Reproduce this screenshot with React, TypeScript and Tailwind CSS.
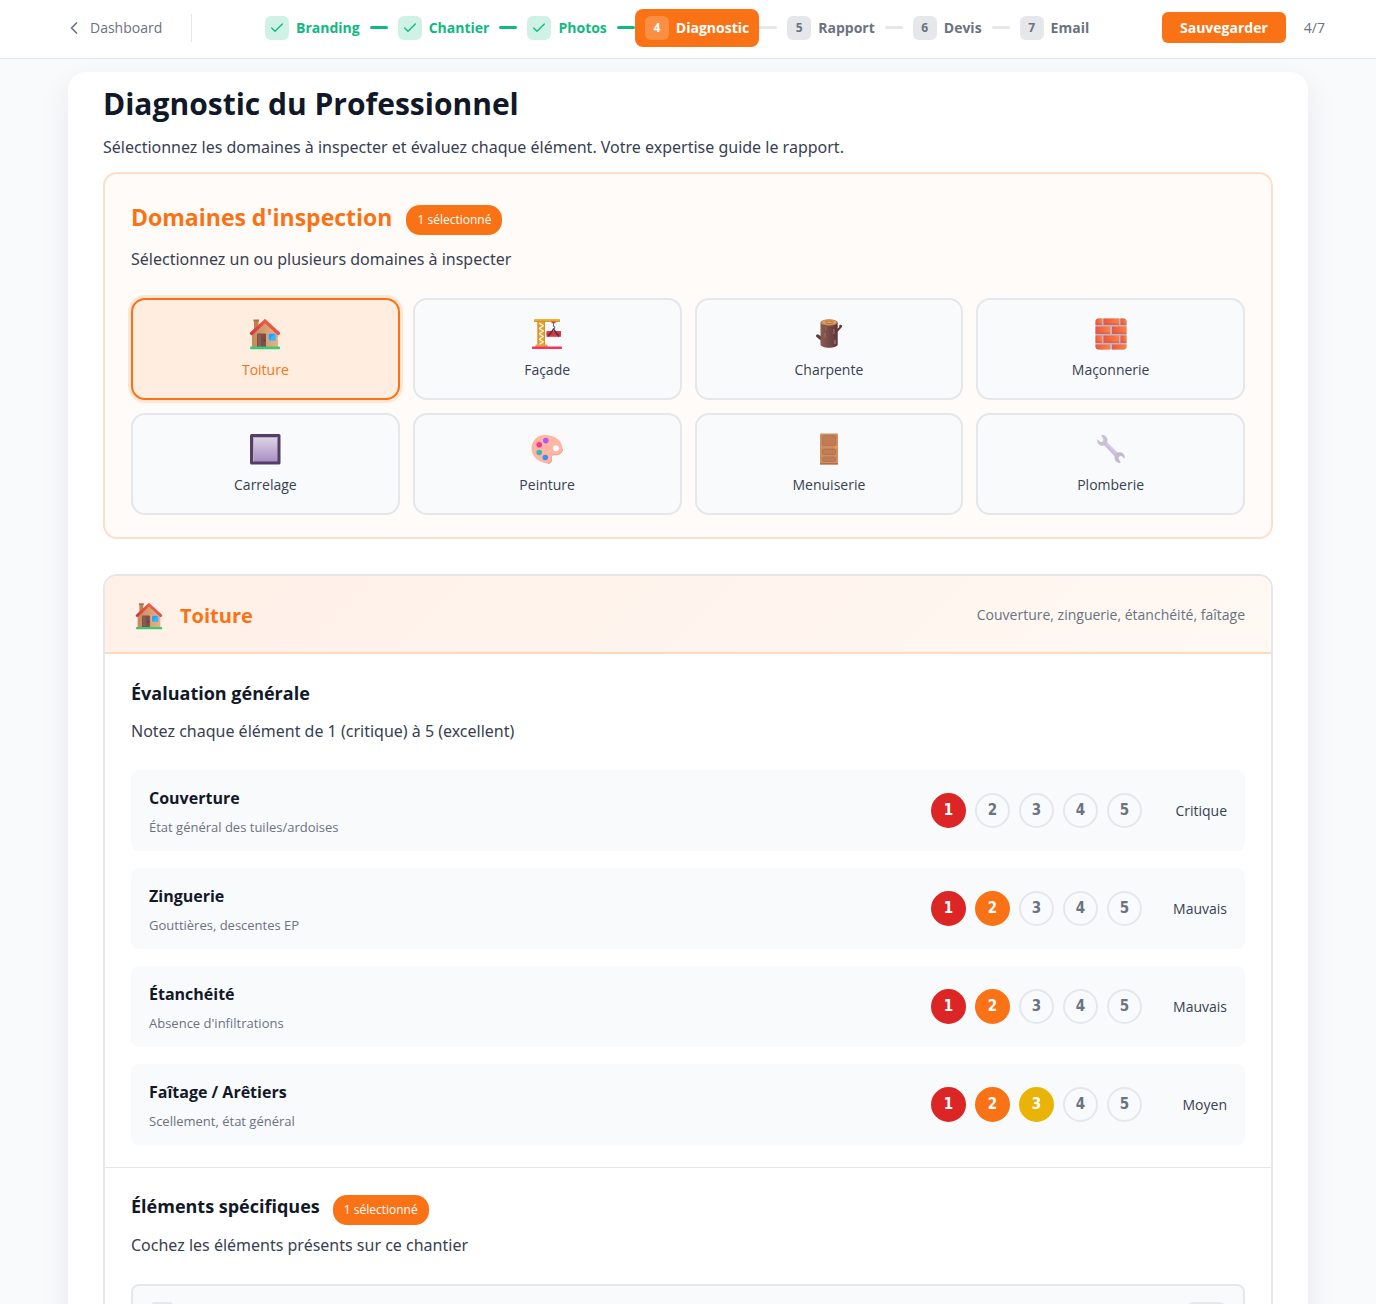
import { useState } from 'react';
import type { ReactNode } from 'react';
import { Check, ChevronLeft } from 'lucide-react';
import clsx from 'clsx';

const HouseIcon = () => (
  <svg viewBox="0 0 32 32" className="h-full w-full" aria-hidden="true">
    <defs>
      <linearGradient id="house-wall" x1="0" x2="1">
        <stop offset="0" stopColor="#c58a5c" />
        <stop offset="1" stopColor="#eab184" />
      </linearGradient>
      <linearGradient id="house-roof" x1="0" y1="1" x2="1" y2="0">
        <stop offset="0" stopColor="#d62f3c" />
        <stop offset="1" stopColor="#f4734a" />
      </linearGradient>
    </defs>
    <path d="M5 2h4.500v12H5z" fill="#b98450" />
    <path d="M4.500 1.500h5.500v2H4.500z" fill="#a87445" />
    <path d="M3 15 16 3l13 12v14H3z" fill="url(#house-wall)" />
    <path d="M16 .8 30.600 14.300a1.300 1.300 0 0 1 .2 1.900l-.5.600a1.200 1.200 0 0 1-1.700.1L16 5.200 3.400 16.900a1.200 1.200 0 0 1-1.700-.1l-.5-.6a1.300 1.300 0 0 1 .2-1.900z" fill="url(#house-roof)" />
    <path d="M8 16.500a1 1 0 0 1 1-1h7a1 1 0 0 1 1 1V29H8z" fill="#7d4f49" />
    <path d="M9 16.500h3V28H9z" fill="#8d5d55" />
    <circle cx="15.300" cy="22.500" r=".8" fill="#4d2c30" />
    <path d="M19 15h8v8h-8z" fill="#f4c295" />
    <path d="M19.500 15.500h7v7h-7z" fill="#2f9df0" />
    <path d="m19.500 22.500 7-7v7z" fill="#35b7f7" />
    <rect x="1" y="28.500" width="30" height="2.700" rx="1" fill="#35cc78" />
  </svg>
);

const CraneIcon = () => (
  <svg viewBox="0 0 32 32" className="h-full w-full" aria-hidden="true">
    <path d="M6.500 3H14v25H6.500z" fill="#e3a535" />
    <path d="m8 5 4.500 2.700L8 10.400l4.500 2.700L8 15.800l4.500 2.700L8 21.200l4.500 2.700L8 26.600" fill="none" stroke="#fdf4dd" strokeWidth="1.200" />
    <path d="M6.500 3h1.300v25H6.500zM12.900 3H14v25h-1.100z" fill="#d98d2e" />
    <rect x="3" y="1" width="26" height="2.800" rx=".8" fill="#e8b52f" />
    <path d="M3 2.800h26v1H3z" fill="#c98d2b" />
    <rect x="4.500" y="26.500" width="12" height="2.500" rx=".6" fill="#e3a535" />
    <path d="M20.500 3.600h4v1.600h-4z" fill="#dc2d55" />
    <path d="M22.500 5v3.200c1.600.6 1.800 2.800 0 3" fill="none" stroke="#777181" strokeWidth="1.200" />
    <path d="M15.500 13H30v5.800H15.500z" fill="#e8354c" />
    <path d="M15.500 15H30v1.700H15.500z" fill="#b8402c" />
    <path d="m17 18.500 5.500-7.500 5.500 7.500" fill="none" stroke="#432e50" strokeWidth="1.300" />
    <rect x="1" y="28.600" width="30" height="2.300" rx=".6" fill="#f83160" />
  </svg>
);

const WoodIcon = () => (
  <svg viewBox="0 0 32 32" className="h-full w-full" aria-hidden="true">
    <defs>
      <linearGradient id="wood-bark" x1="0" x2="1">
        <stop offset="0" stopColor="#8b5d50" />
        <stop offset=".5" stopColor="#754a45" />
        <stop offset="1" stopColor="#5d3639" />
      </linearGradient>
    </defs>
    <path d="m23 12 3.200-2.800V7.600a1.500 1.500 0 0 1 2.500-.4c.6.600.5 1.500-.2 2.300L23 15.500zM9 19l-4.200-2.800a1.700 1.700 0 0 0-1.500 2.600L9 23.500z" fill="#5a3839" />
    <path d="M7.500 4.500h17.200v22c0 1.800-3.800 3.200-8.600 3.200s-8.600-1.400-8.600-3.200z" fill="url(#wood-bark)" />
    <path d="M11 15h2v5h-1.500zM21 22h2v4h-2zM12 9h1.500v3H12zM20 11h1.500v5H20z" fill="#956258" />
    <ellipse cx="16.100" cy="4.500" rx="8.600" ry="3.200" fill="#bb7b43" />
    <ellipse cx="16.100" cy="4.300" rx="7.200" ry="2.400" fill="#dca061" />
    <ellipse cx="16.100" cy="4.300" rx="4" ry="1.300" fill="none" stroke="#b77742" strokeWidth="1" />
  </svg>
);

const BrickIcon = () => (
  <svg viewBox="0 0 32 32" className="h-full w-full" aria-hidden="true">
    <defs>
      <linearGradient id="brick-fill" x1="0" x2="1">
        <stop offset="0" stopColor="#ef5540" />
        <stop offset="1" stopColor="#fb8340" />
      </linearGradient>
      <clipPath id="brick-clip">
        <rect x=".5" y=".5" width="31" height="31" rx="3" />
      </clipPath>
    </defs>
    <g clipPath="url(#brick-clip)">
      <path d="M0 0h32v32H0z" fill="#c3b3c2" />
      <g fill="url(#brick-fill)">
        <path d="M0 0h7v6.500H0z" />
        <path d="M8.500 0H24v6.500H8.500z" />
        <path d="M25.500 0H32v6.500h-6.500z" />
        <path d="M0 8.500h15v7H0z" />
        <path d="M17 8.500h15v7H17z" />
        <path d="M0 17.500h7v7H0z" />
        <path d="M8.500 17.500H24v7H8.500z" />
        <path d="M25.500 17.500H32v7h-6.500z" />
        <path d="M0 26.500h15V32H0z" />
        <path d="M17 26.500h15V32H17z" />
      </g>
      <path d="M0 5.700h7v.9H0zM8.500 5.700H24v.9H8.500zM25.500 5.700H32v.9h-6.500zM0 14.700h15v.9H0zM17 14.700h15v.9H17zM0 23.700h7v.9H0zM8.500 23.700H24v.9H8.500zM25.500 23.700H32v.9h-6.500z" fill="#ca4043" />
    </g>
  </svg>
);

const TileIcon = () => (
  <svg viewBox="0 0 32 32" className="h-full w-full" aria-hidden="true">
    <defs>
      <linearGradient id="tile-fill" x1="0" y1="0" x2="0" y2="1">
        <stop offset="0" stopColor="#ddd5e5" />
        <stop offset="1" stopColor="#aa8fc5" />
      </linearGradient>
    </defs>
    <rect x="1" y="1" width="30.500" height="30.500" rx="1.500" fill="#523f63" />
    <path d="M4 4h24.500v24.500H4z" fill="url(#tile-fill)" />
    <path d="M4 4h24.500v1H4zM4 4h1v24.500H4z" fill="#bbaacb" />
  </svg>
);

const PaletteIcon = () => (
  <svg viewBox="0 0 32 32" className="h-full w-full" aria-hidden="true">
    <path
      d="M14 2C6 2 .5 8 .5 15.500S7.500 30 17 30.500c3 0 4.200-2.300 3.400-4.700-.8-2.600.6-4.300 3.600-4 4.500.4 7.500-2 7.500-6C31.500 7.500 23.500 2 14 2z"
      fill="#ffb5a4"
    />
    <path d="M17 30.500c3 0 4.200-2.300 3.400-4.700-.8-2.600.6-4.300 3.600-4 4.500.4 7.500-2 7.500-6" fill="none" stroke="#eb9c90" />
    <circle cx="25" cy="15.200" r="3.300" fill="#fff" stroke="#f0a294" strokeWidth=".5" />
    <circle cx="14.800" cy="7.600" r="2.800" fill="#b357ef" />
    <circle cx="8.200" cy="11.800" r="2.800" fill="#f13a8d" />
    <circle cx="8.200" cy="19.500" r="2.800" fill="#34b8b4" />
    <circle cx="14.300" cy="24.500" r="2.800" fill="#428cf0" />
  </svg>
);

const DoorIcon = () => (
  <svg viewBox="0 0 32 32" className="h-full w-full" aria-hidden="true">
    <rect x="7" y="0.500" width="18" height="31" rx="1" fill="#cf8d63" />
    <path d="M7 30h18v1.500H7z" fill="#b06e52" />
    <g fill="#c27c54" stroke="#ab6a49" strokeWidth=".6">
      <rect x="9.500" y="2.500" width="13" height="10" rx="1.500" />
      <rect x="9.500" y="16" width="13" height="5.500" rx="1.500" />
      <rect x="9.500" y="24" width="13" height="4.500" rx="1.500" />
    </g>
    <circle cx="23" cy="14.300" r="1.400" fill="#f5a12d" />
  </svg>
);

const WrenchIcon = () => (
  <svg viewBox="0 0 32 32" className="h-full w-full" aria-hidden="true">
    <defs>
      <linearGradient id="wrench-shaft" x1="0" y1="1" x2="1" y2="0">
        <stop offset=".3" stopColor="#bda8dc" />
        <stop offset=".7" stopColor="#e5dcef" />
      </linearGradient>
    </defs>
    <path d="m8.500 11.500 3-3L24 20.500 20.500 24z" fill="url(#wrench-shaft)" />
    <path d="M6.200 2.200c3-.8 6.300 1.500 6.300 5 0 4-3.600 6.300-7 5.300C3 11.700 1.700 9 2.400 6.300l3.100 2.600c1.800.5 3.200-.9 2.800-2.700z" fill="#cac0d2" />
    <path d="M25.800 29.800c-3 .8-6.300-1.500-6.300-5 0-4 3.600-6.300 7-5.300 2.500.8 3.800 3.500 3.100 6.200l-3.100-2.600c-1.800-.5-3.200.9-2.800 2.700z" fill="#c5bacf" />
  </svg>
);

type Domain = { name: string; icon: ReactNode };

const DOMAINS: Domain[] = [
  { name: 'Toiture', icon: <HouseIcon /> },
  { name: 'Façade', icon: <CraneIcon /> },
  { name: 'Charpente', icon: <WoodIcon /> },
  { name: 'Maçonnerie', icon: <BrickIcon /> },
  { name: 'Carrelage', icon: <TileIcon /> },
  { name: 'Peinture', icon: <PaletteIcon /> },
  { name: 'Menuiserie', icon: <DoorIcon /> },
  { name: 'Plomberie', icon: <WrenchIcon /> },
];

const STEPS = ['Branding', 'Chantier', 'Photos', 'Diagnostic', 'Rapport', 'Devis', 'Email'];
const CURRENT_STEP = 4;

const CRITERIA = [
  { name: 'Couverture', hint: 'État général des tuiles/ardoises', score: 1 },
  { name: 'Zinguerie', hint: 'Gouttières, descentes EP', score: 2 },
  { name: 'Étanchéité', hint: "Absence d'infiltrations", score: 2 },
  { name: 'Faîtage / Arêtiers', hint: 'Scellement, état général', score: 3 },
];

const SCORE_LABELS = ['', 'Critique', 'Mauvais', 'Moyen', 'Bon', 'Excellent'];
const SCORE_COLORS = [
  '',
  'border-[#dc2626] bg-[#dc2626]',
  'border-[#f97316] bg-[#f97316]',
  'border-[#eab308] bg-[#eab308]',
  'border-[#84cc16] bg-[#84cc16]',
  'border-[#10b981] bg-[#10b981]',
];

const Lead = ({ children }: { children: ReactNode }) => (
  <p className="font-['Noto_Sans',sans-serif] text-[16px] leading-[30px]">{children}</p>
);

const CountBadge = ({ count }: { count: number }) => (
  <span className="rounded-[14px] bg-[#f97316] px-[11px] text-[12px] leading-[30px] text-white">
    {count} sélectionné{count > 1 ? 's' : ''}
  </span>
);

const Header = () => (
  <header className="flex h-[59px] shrink-0 items-center justify-between border-b border-[#e5e7eb] bg-white pr-[51px] pl-[64px] pb-[3px]">
    <div className="flex items-center">
      <a href="#dashboard" className="flex items-center gap-[6px] text-[14px] text-[#6b7280]">
        <ChevronLeft size={20} strokeWidth={2} />
        Dashboard
      </a>
      <span className="ml-[29px] h-7 w-px bg-[#e5e7eb]" />
    </div>

    <nav aria-label="Étapes">
      <ol className="flex items-center">
        {STEPS.map((step, index) => {
          const number = index + 1;
          const done = number < CURRENT_STEP;
          const active = number === CURRENT_STEP;
          return (
            <li key={step} className="flex items-center">
              {index > 0 && (
                <span className={clsx('h-[3px] w-[18px] rounded-sm', number <= CURRENT_STEP ? 'bg-[#10b981]' : 'bg-[#e5e7eb]')} />
              )}
              <button
                type="button"
                aria-current={active ? 'step' : undefined}
                className={clsx(
                  'flex h-[38px] items-center gap-[7px] rounded-lg px-[10px] text-[14px] font-bold',
                  active && 'bg-[#f97316] text-white',
                  done && 'text-[#10b981]',
                  !active && !done && 'text-[#6b7280]',
                )}
              >
                <span
                  className={clsx(
                    'flex size-6 items-center justify-center rounded-md text-[12px]',
                    active && 'bg-white/20',
                    done && 'bg-[#cff1e6]',
                    !active && !done && 'bg-[#e5e7eb]',
                  )}
                >
                  {done ? <Check size={16} strokeWidth={2} /> : number}
                </span>
                {step}
              </button>
            </li>
          );
        })}
      </ol>
    </nav>

    <div className="flex items-center gap-[18px]">
      <button type="button" className="h-[31px] rounded-md bg-[#f97316] px-[18px] text-[14px] font-bold text-white">
        Sauvegarder
      </button>
      <span className="text-[14px] text-[#6b7280]">
        {CURRENT_STEP}/{STEPS.length}
      </span>
    </div>
  </header>
);

const App = () => {
  const [selected, setSelected] = useState<string[]>(['Toiture']);
  const [scores, setScores] = useState(CRITERIA.map((criterion) => criterion.score));

  const toggleDomain = (name: string) => {
    setSelected((prev) => (prev.includes(name) ? prev.filter((item) => item !== name) : [...prev, name]));
  };

  const setScore = (row: number, score: number) => {
    setScores((prev) => prev.map((value, index) => (index === row ? score : value)));
  };

  return (
    <div className="flex h-screen flex-col overflow-hidden bg-[#f9fafc] font-['Open_Sans','Noto_Sans',sans-serif] text-[#374151]">
      <Header />

      <main className="mx-auto mt-[13px] w-full max-w-[1240px] grow rounded-t-[18px] bg-white px-[35px] pt-3 shadow-[0_10px_30px_rgba(15,23,42,0.08)]">
        <h1 className="mb-2 text-[30px] leading-10 font-bold text-[#111827]">Diagnostic du Professionnel</h1>
        <Lead>Sélectionnez les domaines à inspecter et évaluez chaque élément. Votre expertise guide le rapport.</Lead>

        {/* Domains */}
        <section className="mt-[10px] rounded-[14px] border-2 border-[#fddfc9] bg-[#fffbf8] px-[26px] pt-[26px] pb-[22px]">
          <div className="mb-[9px] flex items-end gap-[14px]">
            <h2 className="text-[23px] leading-[35px] font-bold text-[#f97316]">Domaines d'inspection</h2>
            <CountBadge count={selected.length} />
          </div>
          <Lead>Sélectionnez un ou plusieurs domaines à inspecter</Lead>

          <div className="mt-6 grid grid-cols-4 gap-[13px]">
            {DOMAINS.map(({ name, icon }) => {
              const isSelected = selected.includes(name);
              return (
                <button
                  key={name}
                  type="button"
                  aria-pressed={isSelected}
                  onClick={() => toggleDomain(name)}
                  className={clsx(
                    'flex h-[102px] flex-col items-center rounded-[14px] border-2 pt-[18px] text-[14px]',
                    isSelected
                      ? 'border-[#f97316] bg-[#ffede0] font-medium text-[#f97316] shadow-[0_0_0_3px_#fee5d5]'
                      : 'border-[#e5e7eb] bg-[#f9fafc]',
                  )}
                >
                  <span className="size-8">{icon}</span>
                  <span className="mt-2 leading-6">{name}</span>
                </button>
              );
            })}
          </div>
        </section>

        {/* Selected domain */}
        <section className="mt-[35px] rounded-t-[14px] border-2 border-b-0 border-[#e5e7eb]">
          <div className="flex h-[78px] items-center justify-between rounded-t-xl border-b-2 border-[#fdd9be] bg-linear-135 from-[#fff0e7] to-[#fff8f3] px-[26px]">
            <div className="flex items-center gap-[17px] pt-1 pl-1">
              <span className="size-7">
                <HouseIcon />
              </span>
              <h2 className="text-[20px] leading-8 font-bold text-[#f97316]">Toiture</h2>
            </div>
            <span className="text-[14px] text-[#6b7280]">Couverture, zinguerie, étanchéité, faîtage</span>
          </div>

          <div className="border-b border-[#e5e7eb] px-[26px] pt-6 pb-[22px]">
            <h3 className="mb-2 text-[18px] leading-[30px] font-bold text-[#111827]">Évaluation générale</h3>
            <Lead>Notez chaque élément de 1 (critique) à 5 (excellent)</Lead>

            <ul className="mt-6 flex flex-col gap-[17px]">
              {CRITERIA.map(({ name, hint }, row) => (
                <li key={name} className="flex h-[81px] items-center justify-between rounded-lg bg-[#f9fafc] px-[18px]">
                  <div className="pt-[3px]">
                    <h4 className="text-[16px] leading-[30px] font-bold text-[#111827]">{name}</h4>
                    <p className="text-[13px] leading-7 text-[#6b7280]">{hint}</p>
                  </div>
                  <div className="flex items-center gap-[15px]">
                    <div className="flex gap-[9px]" role="group" aria-label={name}>
                      {[1, 2, 3, 4, 5].map((score) => (
                        <button
                          key={score}
                          type="button"
                          aria-pressed={score <= scores[row]}
                          onClick={() => setScore(row, score)}
                          className={clsx(
                            "size-[35px] rounded-full border-2 font-['DejaVu_Sans_Condensed','DejaVu_Sans',sans-serif] text-[15px] font-bold",
                            score <= scores[row] ? SCORE_COLORS[score] : 'border-[#e5e7eb] text-[#6b7280]',
                            score <= scores[row] && 'text-white',
                          )}
                        >
                          {score}
                        </button>
                      ))}
                    </div>
                    <span className="min-w-[70px] text-right text-[14px]">{SCORE_LABELS[scores[row]]}</span>
                  </div>
                </li>
              ))}
            </ul>
          </div>

          <div className="px-[26px] pt-5">
            <div className="mb-[5px] flex items-end gap-[13px]">
              <h3 className="text-[18px] leading-[37px] font-bold text-[#111827]">Éléments spécifiques</h3>
              <CountBadge count={1} />
            </div>
            <Lead>Cochez les éléments présents sur ce chantier</Lead>

            <div className="mt-6 flex items-start justify-between rounded-lg border-2 border-[#e5e7eb] bg-[#f9fafc] px-[18px] py-4">
              <input
                type="checkbox"
                aria-label="Élément présent"
                className="size-[22px] appearance-none rounded border-2 border-[#e5e7eb] bg-[#e5e7eb]"
              />
              <span className="h-6 w-[38px] rounded-md bg-[#e5e7eb]" />
            </div>
          </div>
        </section>
      </main>
    </div>
  );
};

export default App;
